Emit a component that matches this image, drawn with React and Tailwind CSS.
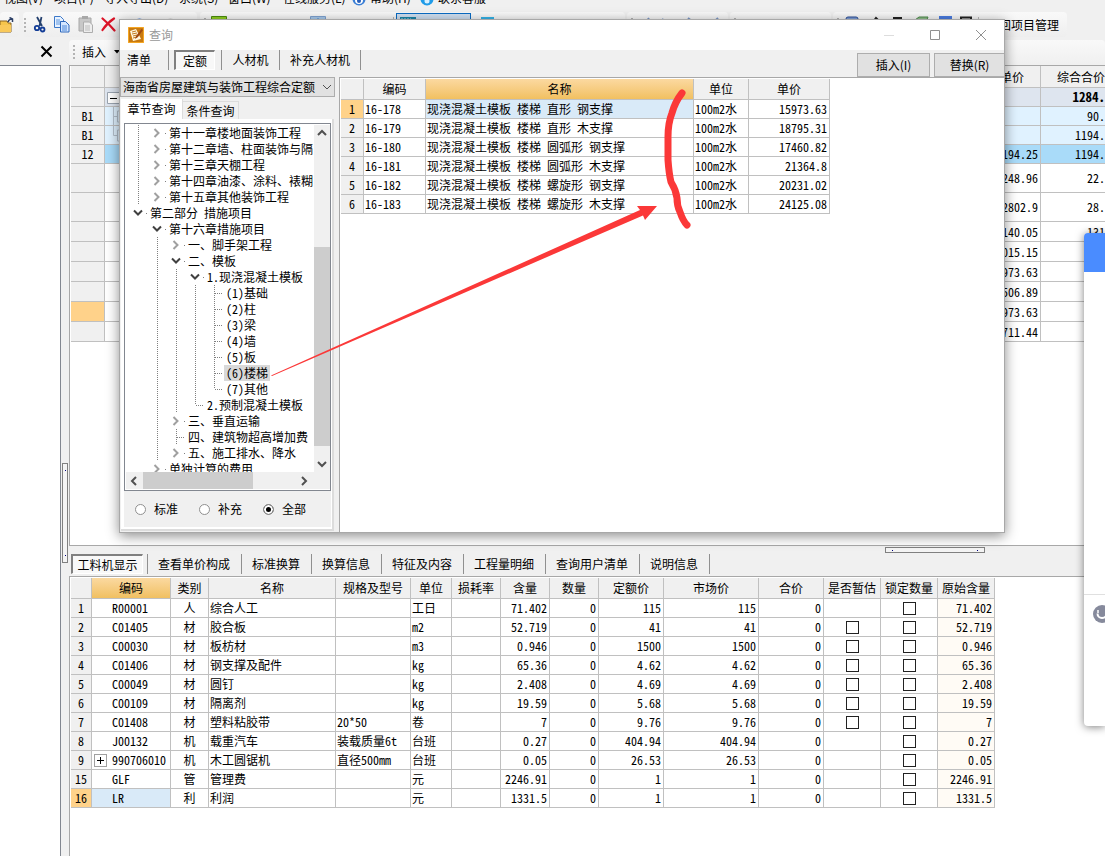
import React from "react";

const rowHead = "border-r border-b border-[#c0c0c0] bg-[#f0f0f0] text-center font-normal p-0";
const cell = "border-r border-b border-[#c0c0c0] p-0 whitespace-nowrap overflow-hidden";
const amber = "bg-linear-to-b from-[#fbd9a0] to-[#f1c060]";

const MENUS = [
  ["视图(V)", "w-[50px]"],
  ["项目(P)", "w-[50px]"],
  ["导入导出(D)", "w-[75px]"],
  ["系统(S)", "w-[49px]"],
  ["窗口(W)", "w-[55px]"],
  ["在线服务(L)", "w-[69px]"],
];

function MenuBar() {
  return (
    <nav className="flex h-1.5 mb-1.5 shrink-0 items-end overflow-hidden pl-1 font-['Noto_Sans_CJK_SC',sans-serif]">
      {MENUS.map(([m, w]) => (
        <button key={m} className={`${w} shrink-0 text-left whitespace-nowrap leading-4`}>{m}</button>
      ))}
      <button className="flex w-[68px] shrink-0 items-end gap-1 whitespace-nowrap leading-4">
        <svg width="14" height="14" viewBox="0 0 14 14" className="shrink-0">
          <circle cx="7" cy="7" r="6.5" fill="#3b7fd6" />
          <circle cx="7" cy="8" r="4" fill="#fff" />
          <circle cx="7" cy="9" r="2" fill="#2a5fb8" />
        </svg>
        帮助(H)
      </button>
      <button className="flex items-end gap-1 whitespace-nowrap leading-4">
        <svg width="14" height="14" viewBox="0 0 14 14" className="shrink-0">
          <circle cx="7" cy="7" r="6.5" fill="#1f9be8" />
          <circle cx="7" cy="9" r="2.5" fill="#d8f0ff" />
        </svg>
        联系客服
      </button>
    </nav>
  );
}

const Grip = () => (
  <svg width="3" height="16" viewBox="0 0 3 16" className="shrink-0" aria-hidden="true">
    {[0, 4, 8, 12].map((y) => <rect key={y} x="0" y={y + 1} width="2" height="2" fill="#b4b4b4" />)}
  </svg>
);

const Rule = () => <span className="h-4 w-px shrink-0 bg-[#b8b8b8]" />;
const group = "flex h-[25px] shrink-0 items-center rounded-sm bg-linear-to-b from-[#f9f9f9] to-[#eeeeee]";

function Toolbar() {
  return (
    <div className="flex h-[26px] shrink-0 items-start overflow-hidden font-['Noto_Sans_CJK_SC',sans-serif]">
      <div className={`${group} w-[19px]`}>
        <button aria-label="打开">
          <svg width="14" height="16" viewBox="0 0 14 16">
            <path d="M0 4h7l1 2h3v9H0z" fill="#f6c54c" stroke="#8a6420" />
            <path d="M0 8h11v7H0z" fill="#f9c95a" />
            <path d="M8 5q1-3 4-3M9.500 .5l3 1.500v3" fill="none" stroke="#2b3f66" strokeWidth="1.500" />
          </svg>
        </button>
      </div>
      <div className={`${group} ml-1 mr-[3px] w-[174px] pl-[1px]`}>
        <Grip />
        <button aria-label="剪切" className="ml-1.5">
          <svg width="15" height="17" viewBox="0 0 15 17" fill="none">
            <path d="M4 1l5 9M8.500 1L6.500 10" stroke="#24406e" strokeWidth="1.800" />
            <circle cx="4" cy="12" r="2.200" stroke="#123c96" strokeWidth="1.800" />
            <circle cx="9.500" cy="13.500" r="2" stroke="#123c96" strokeWidth="1.800" />
          </svg>
        </button>
        <button aria-label="复制" className="ml-1.5">
          <svg width="16" height="17" viewBox="0 0 16 17">
            <path d="M.5.500h6l3 3v8h-9z" fill="#e8f2ff" stroke="#3c78c8" />
            <path d="M2 4h4M2 6h5M2 8h5" stroke="#5a96e0" />
            <path d="M6.500 5.500h5l3.500 3.500v7h-8.500z" fill="#d5e7ff" stroke="#2e68bc" />
            <path d="M8 10h5M8 12h5M8 14h5" stroke="#4a86d8" />
          </svg>
        </button>
        <button aria-label="粘贴" className="ml-2">
          <svg width="16" height="17" viewBox="0 0 16 17">
            <path d="M1 2h12v13H1z" fill="#c8c8c8" stroke="#a8a8a8" />
            <path d="M4 0h6v3H4z" fill="#a8a8a8" />
            <path d="M5.500 6h6l3 3v7.500h-9z" fill="#ededed" stroke="#adadad" />
            <path d="M7 10h5M7 12h5M7 14h5" stroke="#bdbdbd" />
          </svg>
        </button>
        <button aria-label="删除" className="ml-[7px]">
          <svg width="15" height="15" viewBox="0 0 15 15">
            <path d="M1.500 1.500Q8 7 13.500 13.500M13 1.500Q6 6 1.500 13" fill="none" stroke="#dc1428" strokeWidth="2.200" strokeLinecap="round" />
          </svg>
        </button>
        <span className="ml-1.5"><Rule /></span>
        <svg width="50" height="16" viewBox="0 0 50 16" className="ml-2.5" fill="none" strokeWidth="2">
          <path d="M2 8a5.500 5.500 0 0 1 11 0" stroke="#3c78d8" />
          <path d="M33 8a5.500 5.500 0 0 1 11 0" stroke="#c4c4c4" />
        </svg>
      </div>
      <div className={`${group} w-[425px] pl-1`}>
        <Grip />
        <svg width="17" height="17" viewBox="0 0 17 17" className="ml-1 shrink-0">
          <path d="M.5.500h15v16H.5z" fill="#8fd020" stroke="#4c8c10" />
        </svg>
        <span className="ml-1 w-[78px] whitespace-nowrap">单位工程人材</span>
        <svg width="17" height="17" viewBox="0 0 17 17" className="shrink-0">
          <path d="M.5.500h15v16H.5z" fill="#a8cbee" stroke="#7fa2d0" />
          <path d="M4 6l4-4 4 4z" fill="#4a90d8" />
        </svg>
        <span className="ml-1 w-[62px] whitespace-nowrap">预算书设置</span>
        <Rule />
        <button className="ml-0.5 flex h-[23px] w-[75px] shrink-0 items-center border border-[#0a6cc4] bg-[#cfdff0] pl-[3px]">
          <svg width="16" height="16" viewBox="0 0 16 16" className="shrink-0">
            <path d="M0 0h16v16H0z" fill="#1c86a8" />
            <path d="M1 2h10" stroke="#9fe0f0" strokeDasharray="2 1" />
          </svg>
          <span className="ml-1 whitespace-nowrap">属性查看</span>
        </button>
        <span className="ml-1"><Rule /></span>
        <svg width="14" height="16" viewBox="0 0 14 16" className="ml-1.5 shrink-0">
          <path d="M0 0h13v16H0z" fill="#34b4ea" />
        </svg>
        <span className="ml-1.5 w-[72px] whitespace-nowrap">代号查看器</span>
        <span className="whitespace-nowrap">最新调差</span>
      </div>
      <div className={`${group} ml-0.5 w-[101px] gap-2 pl-1`}>
        <Grip />
        <svg width="85" height="16" viewBox="0 0 85 16" stroke="#7c98c8" strokeWidth="2" fill="none">
          <path d="M3 6l4-5M20 2l5 3M46 1l5 4M72 5l4-4" />
        </svg>
      </div>
      <div className={`${group} ml-0.5 w-[101px] pl-1`}><Grip /></div>
      <div className={`${group} ml-0.5 w-[234px] pl-1`}>
        <Grip />
        <svg width="134" height="17" viewBox="0 0 134 17" className="ml-1 shrink-0">
          <rect x="2" y="1" width="12" height="14" rx="2" fill="#7f9fd8" stroke="#2a4f98" />
          <path d="M29 6l3-4 4 4M49 2h9M52 3v10" stroke="#222" strokeWidth="2" fill="none" />
          <path d="M71 4l4-3h9l-2 5H71z" fill="#8fbf8a" stroke="#4c8a4a" />
          <path d="M95 0h13v14H95z" fill="#4a7ce0" />
          <path d="M117 1.500h10v12h-10z" fill="none" stroke="#222" strokeWidth="2" />
        </svg>
        <Rule />
        <button className="ml-2 whitespace-nowrap">返回项目管理</button>
      </div>
    </div>
  );
}

const BACK_ROWS = [
  ["", "", "1284.", "h-[19px]", "bg-[#dee5ef]", "bg-[#f0f0f0]"],
  ["B1", "", "90.", "h-[19px]", "bg-[#e0f2ff]", "bg-[#f0f0f0]"],
  ["B1", "", "1194.", "h-[19px]", "bg-[#e0f2ff]", "bg-[#f0f0f0]"],
  ["12", "194.25", "1194.", "h-[19px]", "bg-[#a9dbf9]", "bg-[#f0f0f0]"],
  ["", "248.96", "22.", "h-[29px]", "bg-white", "bg-[#f0f0f0]"],
  ["", "2802.9", "28.", "h-[29px]", "bg-white", "bg-[#f0f0f0]"],
  ["", "140.05", "131", "h-5", "bg-white", "bg-[#f0f0f0]"],
  ["", "015.15", "", "h-5", "bg-white", "bg-[#f0f0f0]"],
  ["", "973.63", "", "h-5", "bg-white", "bg-[#f0f0f0]"],
  ["", "506.89", "", "h-5", "bg-white", "bg-[#f0f0f0]"],
  ["", "973.63", "", "h-5", "bg-white", "bg-[#ffd28a]"],
  ["", "711.44", "", "h-5", "bg-white", "bg-[#f0f0f0]"],
];

function BackTable() {
  return (
    <table className="w-full table-fixed border-separate border-spacing-0">
      <colgroup>
        <col className="w-[34px]" />
        <col />
        <col className="w-[84px]" />
        <col className="w-16" />
      </colgroup>
      <thead>
        <tr className="h-[22px]">
          <th className={rowHead} />
          <th className={rowHead} />
          <th className="border-r border-b border-[#c0c0c0] bg-[#f0f0f0] p-0 pr-4 text-right font-normal">单价</th>
          <th className="border-b border-[#c0c0c0] bg-[#f0f0f0] p-0 text-right font-normal whitespace-nowrap">综合合价</th>
        </tr>
      </thead>
      <tbody>
        {BACK_ROWS.map(([id, a, b, h, bg, hb], i) => (
          <tr key={i} className={h}>
            <th className={`border-r border-b border-[#c0c0c0] p-0 text-center font-normal ${hb}`}>{id}</th>
            <td className={`${cell} ${bg} align-top`}>
              {i < 3 && (
                <svg width="16" height="18" viewBox="0 0 16 18" className="block" fill="none" stroke="#9aa4b0">
                  {i === 0 && <path d="M2.500 4.500h12v11h-12z" fill="#fff" />}
                  {i === 0 && <path d="M5 10.500h7" stroke="#000" />}
                  {i > 0 && <path d={i === 1 ? "M8.500 0V18M8.500 9.500h4M12.500 4v11h4M12.500 4h4" : "M8.500 0V9.500h4M12.500 4v11h4M12.500 4h4"} stroke="#b4c0cc" />}
                </svg>
              )}
            </td>
            <td className={`${cell} ${bg} pr-0.5 text-right`}>{a}</td>
            <td className={`border-b border-[#c0c0c0] p-0 text-right ${bg} ${i === 0 ? "text-[13px] leading-4 font-bold" : ""}`}>{b}</td>
          </tr>
        ))}
      </tbody>
    </table>
  );
}

const DETAIL_TABS = ["查看单价构成", "标准换算", "换算信息", "特征及内容", "工程量明细", "查询用户清单", "说明信息"];

const DETAIL_HEADS = ["编码", "类别", "名称", "规格及型号", "单位", "损耗率", "含量", "数量", "定额价", "市场价", "合价", "是否暂估", "锁定数量", "原始含量"];

const DETAIL_ROWS = [
  ["1", "R00001", "人", "综合人工", "", "工日", "71.402", "115", false],
  ["2", "C01405", "材", "胶合板", "", "m2", "52.719", "41", true],
  ["3", "C00030", "材", "板枋材", "", "m3", "0.946", "1500", true],
  ["4", "C01406", "材", "钢支撑及配件", "", "kg", "65.36", "4.62", true],
  ["5", "C00049", "材", "圆钉", "", "kg", "2.408", "4.69", true],
  ["6", "C00109", "材", "隔离剂", "", "kg", "19.59", "5.68", true],
  ["7", "C01408", "材", "塑料粘胶带", "20*50", "卷", "7", "9.76", true],
  ["8", "J00132", "机", "载重汽车", "装载质量6t", "台班", "0.27", "404.94", false],
  ["9", "990706010", "机", "木工圆锯机", "直径500mm", "台班", "0.05", "26.53", false],
  ["15", "GLF", "管", "管理费", "", "元", "2246.91", "1", false],
  ["16", "LR", "利", "利润", "", "元", "1331.5", "1", false],
];

const Tick = ({ label }) => (
  <input type="checkbox" aria-label={label} className="mx-auto block size-[13px] appearance-none border border-[#222] bg-white checked:bg-[#222]" />
);

function DetailTable() {
  return (
    <table className="w-[924px] table-fixed border-separate border-spacing-0">
      <colgroup>
        <col className="w-[21px]" />
        <col className="w-[79px]" />
        <col className="w-[38px]" />
        <col className="w-[127px]" />
        <col className="w-[75px]" />
        <col className="w-[41px]" />
        <col className="w-[49px]" />
        <col className="w-[49px]" />
        <col className="w-[49px]" />
        <col className="w-[65px]" />
        <col className="w-[95px]" />
        <col className="w-[65px]" />
        <col className="w-[57px]" />
        <col className="w-[57px]" />
        <col className="w-[57px]" />
      </colgroup>
      <thead>
        <tr className="h-[21px]">
          <th className={rowHead} />
          {DETAIL_HEADS.map((h, i) => (
            <th key={h} className={`border-r border-b border-[#c0c0c0] p-0 font-normal whitespace-nowrap ${i === 0 ? amber : "bg-[#f0f0f0]"}`}>{h}</th>
          ))}
        </tr>
      </thead>
      <tbody>
        {DETAIL_ROWS.map(([n, code, kind, name, spec, unit, qty, price, est]) => (
          <tr key={n} className="h-[19px]">
            <th className={`border-r border-b border-[#c0c0c0] p-0 font-normal ${n === "16" ? "bg-[#ffd28a]" : "bg-[#f0f0f0]"}`}>{n}</th>
            <td className={`${cell} ${n === "16" ? "bg-[#d9eaf8]" : ""}`}>
              <div className="flex items-center pl-0.5">
                {n === "9" ? (
                  <button aria-label="展开" className="flex size-[13px] shrink-0 items-center justify-center border border-[#a0a0a0] bg-white">
                    <svg width="7" height="7" viewBox="0 0 7 7"><path d="M0 3.500h7M3.500 0v7" stroke="#000" /></svg>
                  </button>
                ) : <span className="w-[13px] shrink-0" />}
                <span className="ml-[5px]">{code}</span>
              </div>
            </td>
            <td className={`${cell} text-center`}>{kind}</td>
            <td className={`${cell} pl-px`}>{name}</td>
            <td className={`${cell} pl-px`}>{spec}</td>
            <td className={`${cell} pl-px`}>{unit}</td>
            <td className={cell} />
            <td className={`${cell} pr-0.5 text-right`}>{qty}</td>
            <td className={`${cell} pr-0.5 text-right`}>0</td>
            <td className={`${cell} pr-0.5 text-right`}>{price}</td>
            <td className={`${cell} pr-0.5 text-right`}>{price}</td>
            <td className={`${cell} pr-0.5 text-right`}>0</td>
            <td className={cell}>{est && <Tick label="是否暂估" />}</td>
            <td className={cell}><Tick label="锁定数量" /></td>
            <td className={`${cell} bg-[#fffbf5] pr-0.5 text-right`}>{qty}</td>
          </tr>
        ))}
      </tbody>
    </table>
  );
}

// guides: one character per indent slot, "|" draws a dotted line, "." leaves it blank
// node: "+" collapsed, "-" expanded, "T" leaf, "L" last leaf
const TREE = [
  ["|", "+", "第十一章楼地面装饰工程"],
  ["|", "+", "第十二章墙、柱面装饰与隔"],
  ["|", "+", "第十三章天棚工程"],
  ["|", "+", "第十四章油漆、涂料、裱糊"],
  ["|", "+", "第十五章其他装饰工程"],
  ["", "-", "第二部分 措施项目"],
  [".", "-", "第十六章措施项目"],
  [".|", "+", "一、脚手架工程"],
  [".|", "-", "二、模板"],
  [".||", "-", "1.现浇混凝土模板"],
  [".|||", "T", "(1)基础"],
  [".|||", "T", "(2)柱"],
  [".|||", "T", "(3)梁"],
  [".|||", "T", "(4)墙"],
  [".|||", "T", "(5)板"],
  [".|||", "T", "(6)楼梯"],
  [".|||", "L", "(7)其他"],
  [".||", "L", "2.预制混凝土模板"],
  [".|", "+", "三、垂直运输"],
  [".|", "T", "四、建筑物超高增加费"],
  [".|", "+", "五、施工排水、降水"],
  [".", "+", "单独计算的费用"],
];

function TreeSlot({ kind }) {
  return (
    <svg width="19" height="16" viewBox="0 0 19 16" className="shrink-0" fill="none" aria-hidden="true">
      {(kind === "|" || kind === "T") && <path d="M9.500 0V16" stroke="#808080" strokeDasharray="1 1" />}
      {kind === "L" && <path d="M9.500 0V8" stroke="#808080" strokeDasharray="1 1" />}
      {(kind === "T" || kind === "L") && <path d="M10 8.500H18" stroke="#808080" strokeDasharray="1 1" />}
      {kind === "+" && <path d="M6.500 4l4 4-4 4" stroke="#a0a0a0" strokeWidth="2" />}
      {kind === "-" && <path d="M5 5.500l4 4 4-4" stroke="#404040" strokeWidth="2" />}
      {(kind === "+" || kind === "-") && <path d="M17 8.500h1" stroke="#808080" />}
    </svg>
  );
}

const Arrow = ({ d }) => (
  <svg width="16" height="16" viewBox="0 0 16 16" fill="none" className="shrink-0"><path d={d} stroke="#505050" strokeWidth="2" /></svg>
);

function Tree() {
  return (
    <div className="flex h-[368px] flex-col border border-[#828790] bg-white py-px pl-px">
      <div className="flex min-h-0 flex-1">
        <ul className="min-w-0 flex-1 overflow-hidden pl-[3px]">
          {TREE.map(([guides, node, label]) => (
            <li key={label} className="flex h-4 items-center whitespace-nowrap leading-4">
              {guides.split("").map((g, i) => <TreeSlot key={i} kind={g} />)}
              <TreeSlot kind={node} />
              <span className={label === "(6)楼梯" ? "bg-[#d9d9d9] px-0.5" : "px-0.5"}>{label}</span>
            </li>
          ))}
        </ul>
        <div className="flex w-4 flex-col bg-[#f0f0f0]">
          <Arrow d="M4 10l4-4 4 4" />
          <div className="mt-[106px] h-[199px] bg-[#cdcdcd]" />
          <span className="flex-1" />
          <Arrow d="M4 6l4 4 4-4" />
        </div>
      </div>
      <div className="flex h-[17px] shrink-0 items-center bg-[#f0f0f0] pr-[18px]">
        <Arrow d="M10 4L6 8l4 4" />
        <div className="ml-px h-full w-[110px] bg-[#cdcdcd]" />
        <span className="flex-1" />
        <Arrow d="M6 4l4 4-4 4" />
      </div>
    </div>
  );
}

const QUOTA_ROWS = [
  ["1", "16-178", "现浇混凝土模板 楼梯 直形 钢支撑", "15973.63"],
  ["2", "16-179", "现浇混凝土模板 楼梯 直形 木支撑", "18795.31"],
  ["3", "16-180", "现浇混凝土模板 楼梯 圆弧形 钢支撑", "17460.82"],
  ["4", "16-181", "现浇混凝土模板 楼梯 圆弧形 木支撑", "21364.8"],
  ["5", "16-182", "现浇混凝土模板 楼梯 螺旋形 钢支撑", "20231.02"],
  ["6", "16-183", "现浇混凝土模板 楼梯 螺旋形 木支撑", "24125.08"],
];

function QuotaTable() {
  return (
    <table className="w-[489px] table-fixed border-separate border-spacing-0">
      <colgroup>
        <col className="w-[23px]" />
        <col className="w-[62px]" />
        <col className="w-[268px]" />
        <col className="w-[55px]" />
        <col className="w-[81px]" />
      </colgroup>
      <thead>
        <tr className="h-[21px]">
          <th className={rowHead} />
          <th className={rowHead}>编码</th>
          <th className={`border-r border-b border-[#c0c0c0] p-0 font-normal ${amber}`}>名称</th>
          <th className={rowHead}>单位</th>
          <th className={rowHead}>单价</th>
        </tr>
      </thead>
      <tbody>
        {QUOTA_ROWS.map(([n, code, name, price]) => (
          <tr key={n} className="h-[19px]">
            <th className={`border-r border-b border-[#c0c0c0] p-0 font-normal ${n === "1" ? "bg-[#ffd28a]" : "bg-[#f0f0f0]"}`}>{n}</th>
            <td className={`${cell} pl-px`}>{code}</td>
            <td className={`${cell} pl-px ${n === "1" ? "bg-[#d9eaf8]" : ""}`}>{name}</td>
            <td className={`${cell} pl-px`}>100m2水</td>
            <td className={`${cell} pr-0.5 text-right`}>{price}</td>
          </tr>
        ))}
      </tbody>
    </table>
  );
}

const pressed = "border-t-2 border-l-2 border-r border-b border-t-[#808080] border-l-[#808080] border-r-white border-b-white bg-[#f8f8f8]";
const dlgTab = "h-5 border-r border-[#909090] whitespace-nowrap";
const dlgButton = "h-6 border border-[#adadad] bg-[#e1e1e1] text-center whitespace-nowrap font-['Noto_Sans_CJK_SC',sans-serif]";

function QueryDialog() {
  return (
    <section role="dialog" aria-label="查询" className="absolute top-[19px] right-[100px] left-[119px] flex h-[514px] flex-col overflow-hidden border border-[#a8a8a8] bg-[#f0f0f0] shadow-[0_3px_12px_rgba(0,0,0,0.45)]">
      <header className="flex h-[30px] shrink-0 items-center bg-white pl-2">
        <svg width="16" height="16" viewBox="0 0 16 16">
          <rect width="16" height="16" rx="1.500" fill="#c87a10" />
          <path d="M2 4l6-2 5 10-8 2z" fill="#fff8e0" />
          <path d="M4 5l4-1M4 7l5-1M5 9l4-1M5 11l4-1" stroke="#c07a20" />
          <path d="M13.500 2L8 9l-1 3 3-2 5-7z" fill="#a04a10" />
          <path d="M.5.500h15v15H.5z" fill="none" stroke="#f5a623" />
        </svg>
        <h1 className="ml-[5px] font-['Noto_Sans_CJK_SC',sans-serif] text-[#999]">查询</h1>
        <div className="ml-auto flex items-center pr-[17px]">
          <button aria-label="最小化" className="mr-[34px]"><svg width="12" height="12" viewBox="0 0 12 12"><path d="M1 6.500h10" stroke="#ddd" /></svg></button>
          <button aria-label="最大化" className="mr-[34px]"><svg width="12" height="12" viewBox="0 0 12 12"><path d="M1.500 1.500h9v9h-9z" fill="none" stroke="#909090" /></svg></button>
          <button aria-label="关闭"><svg width="12" height="12" viewBox="0 0 12 12"><path d="M1 1l10 10M11 1L1 11" stroke="#909090" /></svg></button>
        </div>
      </header>
      <div className="flex h-[27px] shrink-0 items-start">
        <button className={`${dlgTab} w-[49px] pr-2.5`}>清单</button>
        <button className={`${pressed} ml-[5px] h-5 w-[41px] whitespace-nowrap leading-4`}>定额</button>
        <span className="ml-1.5 h-5 w-px bg-[#909090]" />
        <button className={`${dlgTab} w-[58px]`}>人材机</button>
        <button className={`${dlgTab} w-[81px]`}>补充人材机</button>
        <button className={`${dlgButton} mt-[3px] ml-auto w-[73px]`}>插入(I)</button>
        <button className={`${dlgButton} mt-[3px] ml-1 w-[70px] border-r-0`}>替换(R)</button>
      </div>
      <div className="flex min-h-0 flex-1">
        <div className="flex w-[215px] shrink-0 flex-col">
          <div className="relative">
            <select aria-label="定额库" className="block h-5 w-full appearance-none border border-[#adadad] bg-[#e1e1e1] pl-0.5 leading-4">
              <option>海南省房屋建筑与装饰工程综合定额</option>
            </select>
            <svg width="10" height="6" viewBox="0 0 10 6" className="pointer-events-none absolute top-[7px] right-[3px]"><path d="M1 1l4 4 4-4" fill="none" stroke="#505050" /></svg>
          </div>
          <div className="mt-0.5 flex h-5 items-end pl-px">
            <button className="h-5 w-[62px] border-r border-[#dcdcdc] bg-white whitespace-nowrap">章节查询</button>
            <button className="h-[18px] w-14 border border-b-0 border-l-0 border-[#dcdcdc] whitespace-nowrap">条件查询</button>
          </div>
          <div className="mr-px mb-px ml-px flex flex-1 flex-col border-r-2 border-b-2 border-[#dcdcdc] bg-white pt-1 pr-px pl-[3px]">
            <Tree />
            <div className="mb-0.5 flex flex-1 items-center gap-4 bg-[#f0f0f0] pl-[11px]">
              {["标准", "补充", "全部"].map((r) => (
                <label key={r} className="flex w-12 items-center gap-2 whitespace-nowrap">
                  <input type="radio" name="scope" defaultChecked={r === "全部"} className="size-[11px] shrink-0 appearance-none rounded-full border border-[#909090] bg-white checked:bg-black checked:shadow-[inset_0_0_0_2px_#fff]" />
                  {r}
                </label>
              ))}
            </div>
          </div>
        </div>
        <div className="ml-1 min-w-0 flex-1 overflow-hidden border-t border-l border-[#a8a8a8] bg-white pt-px pl-px">
          <QuotaTable />
        </div>
      </div>
    </section>
  );
}

function ChatPanel() {
  return (
    <aside className="absolute top-[233px] right-0 flex h-[493px] w-[21px] flex-col overflow-hidden rounded-l-sm bg-white shadow-[0_1px_8px_rgba(0,0,0,0.5)]">
      <div className="h-[39px] bg-[#4a8cff]" />
      <div className="mt-[322px] border-t border-[#e0e0e0] pt-2.5 pl-[9px]">
        <button aria-label="表情" className="block w-3 overflow-hidden">
          <svg width="18" height="18" viewBox="0 0 18 18">
            <circle cx="9" cy="9" r="9" fill="#868a9c" />
            <path d="M4.500 8.500c0 6 9 6 9 0" fill="none" stroke="#fff" strokeWidth="2" />
            <path d="M5 5v3M13 5v3" stroke="#fff" strokeWidth="1.500" />
          </svg>
        </button>
      </div>
    </aside>
  );
}

export default function App() {
  return (
    <div className="relative flex h-screen flex-col overflow-hidden bg-[#f0f0f0] font-['Noto_Sans_Mono_CJK_SC','Noto_Sans_CJK_SC',sans-serif] text-xs leading-4 text-black">
      <MenuBar />
      <Toolbar />
      <div className="flex min-h-0 flex-1">
        <div className="flex w-[61px] shrink-0 flex-col">
          <div className="flex h-[27px] items-center justify-end pr-2">
            <button aria-label="关闭面板">
              <svg width="13" height="13" viewBox="0 0 13 13" className="block"><path d="M1.500 1.500l10 10M11.500 1.500l-10 10" stroke="#000" strokeWidth="2" /></svg>
            </button>
          </div>
          <div className="flex-1 border-t border-r border-[#828790] bg-white" />
        </div>
        <div className="flex w-2 shrink-0 flex-col items-center pt-[425px]">
          <div className="flex h-[100px] w-1.5 flex-col items-center justify-between border border-[#808080] bg-[#f4f4f4] py-1.5">
            <span className="size-px bg-[#000080]" />
            <span className="size-px bg-[#000080]" />
          </div>
        </div>
        <main className="flex min-w-0 flex-1 flex-col">
          <div className="flex h-[27px] shrink-0 items-center">
            <div className="flex h-6 w-full items-center rounded-sm bg-linear-to-b from-[#f9f9f9] to-[#f0f0f0] pl-1">
              <Grip />
              <button className="ml-1.5 flex items-center gap-2 font-['Noto_Sans_CJK_SC',sans-serif]">
                插入
                <svg width="6" height="4" viewBox="0 0 6 4"><path d="M0 0h6L3 3.500z" fill="#000" /></svg>
              </button>
            </div>
          </div>
          <div className="h-[481px] shrink-0 overflow-hidden border-t border-b border-l border-[#a8a8a8] bg-white pl-px">
            <BackTable />
          </div>
          <div className="flex h-[30px] shrink-0 items-start">
            <button className={`${pressed} mt-2 ml-0.5 h-5 w-[72px] whitespace-nowrap leading-4`}>工料机显示</button>
            <span className="mt-2 ml-1 h-5 w-px bg-[#909090]" />
            {DETAIL_TABS.map((t) => (
              <button key={t} className="mt-2 h-5 border-r border-[#909090] pr-[11px] pl-2.5 whitespace-nowrap">{t}</button>
            ))}
            <div className="mt-px mr-[120px] ml-auto flex h-1.5 w-[100px] items-center justify-between border border-[#808080] bg-[#f4f4f4] px-1.5">
              <span className="size-px bg-[#000080]" />
              <span className="size-px bg-[#000080]" />
            </div>
          </div>
          <div className="min-h-0 flex-1 overflow-hidden border-t border-l border-[#a8a8a8] bg-white pt-px pl-px">
            <DetailTable />
          </div>
        </main>
      </div>
      <QueryDialog />
      <ChatPanel />
      <svg width="430" height="310" viewBox="270 80 430 310" className="pointer-events-none absolute top-20 left-[270px]" aria-hidden="true">
        <path d="M271 375.500L640 210l-3-4h20l-12 14-2-4.500L272 376z" fill="#fb3838" />
        <path d="M682 93q-7 9-10 20-4 10-4 24v23q1 14 3 22 5 8 6 16 0 8 3 14 3 9 7 13" fill="none" stroke="#fb3838" strokeWidth="7" strokeLinecap="round" strokeLinejoin="round" />
      </svg>
    </div>
  );
}
